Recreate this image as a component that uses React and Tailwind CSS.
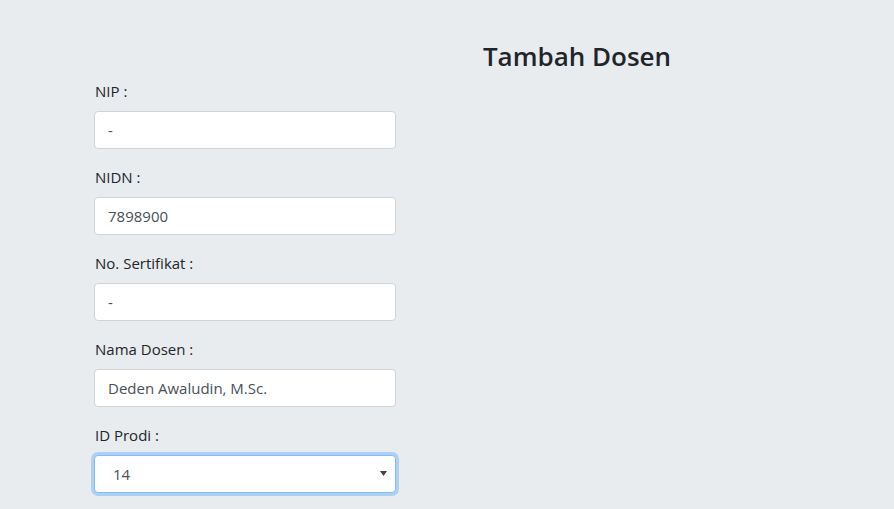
export default function App() {
  const fields = [
    { label: "NIP :", value: "-" },
    { label: "NIDN :", value: "7898900" },
    { label: "No. Sertifikat :", value: "-" },
    { label: "Nama Dosen :", value: "Deden Awaludin, M.Sc." },
  ];
  return (
    <div className="min-h-[509px] w-full bg-[#e9ecef] font-['Open_Sans',sans-serif] text-[#212529] overflow-hidden">
      <div className="pt-[37px] pl-[260px] text-center">
        <h2 className="h-[38px] text-[26px] leading-[38px] font-semibold text-[#212529]">Tambah Dosen</h2>
      </div>
      <div className="mt-[4px] pl-[94px] w-[396px]">
        {fields.map((f) => (
          <div key={f.label} className="mb-4">
            <label className="block h-6 mb-2 pl-[1px] text-[15px] leading-6">{f.label}</label>
            <div className="h-[38px] w-[302px] rounded border border-[#ced4da] bg-white px-[13px] flex items-center text-[15px] text-[#495057]">
              {f.value}
            </div>
          </div>
        ))}
        <div className="mb-4">
          <label className="block h-6 mb-2 pl-[1px] text-[15px] leading-6">ID Prodi :</label>
          <div className="h-[38px] w-[302px] rounded border border-[#80bdff] bg-white pl-[18px] pr-[8px] flex items-center justify-between text-[15px] text-[#495057] shadow-[0_0_0_3px_rgba(0,123,255,0.25)]">
            <span>14</span>
            <svg width="7" height="5" viewBox="0 0 7 5" className="mt-[-2px]">
              <path d="M0 0 L7 0 L3.5 5 Z" fill="#444" />
            </svg>
          </div>
        </div>
      </div>
    </div>
  );
}
